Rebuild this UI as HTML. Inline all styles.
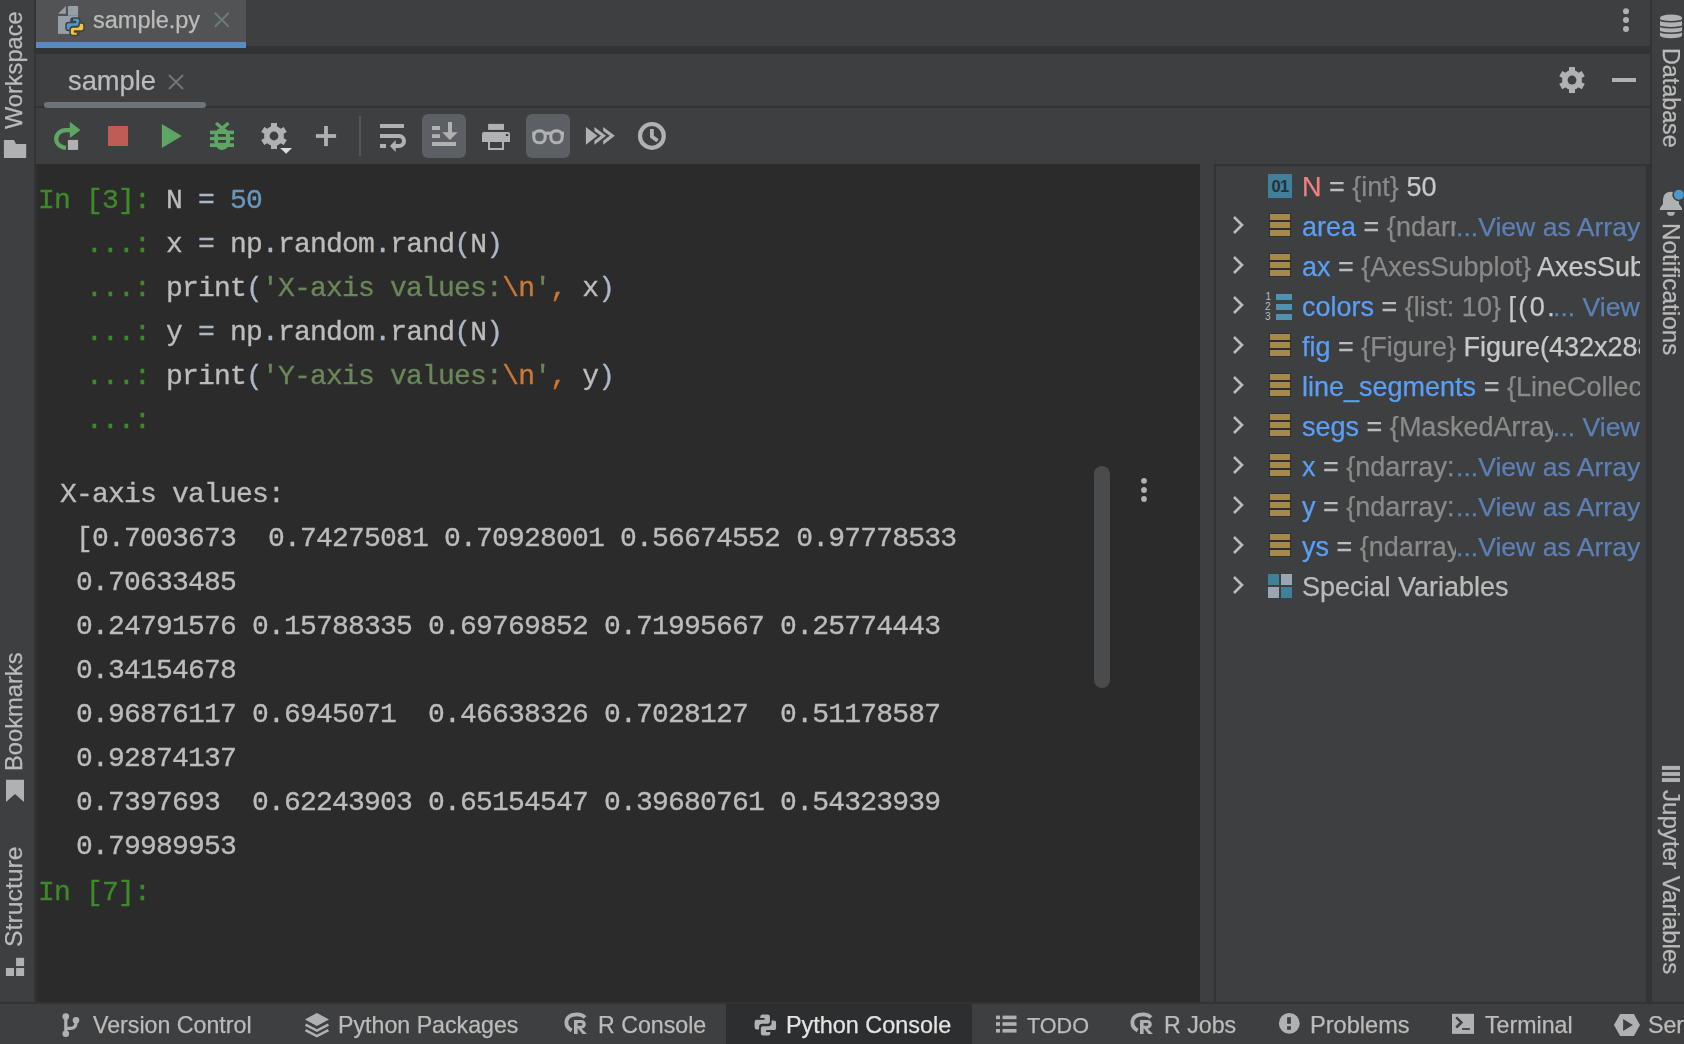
<!DOCTYPE html>
<html><head><meta charset="utf-8">
<style>
*{margin:0;padding:0;box-sizing:border-box}
html,body{width:1684px;height:1044px;overflow:hidden;background:#3e3f41;font-family:"Liberation Sans",sans-serif}
.ui,.ln,.vr,.vl{will-change:transform}
.ui,.vr,.vl{-webkit-text-stroke:0.25px currentColor}
.abs{position:absolute}
.ui{color:#bbbbbb;font-family:"Liberation Sans",sans-serif;white-space:nowrap}
#con{position:absolute;left:36px;top:164px;width:1164px;height:839px;background:#2b2b2b;overflow:hidden}
.ln{position:absolute;height:44px;line-height:44px;font-family:"Liberation Mono",monospace;font-size:28px;letter-spacing:-0.8px;white-space:pre;color:#bcbcbc;-webkit-text-stroke:0.35px currentColor}
.g{color:#3d8a28}.n{color:#6897bb}.s{color:#6a8759}.o{color:#cc7832}.p{color:#a9b7c6}
.vr{position:absolute;left:87px;height:40px;line-height:40px;font-size:27px;white-space:nowrap;color:#bbbbbb}
.vl{position:absolute;right:0;height:40px;line-height:40px;font-size:26.6px;white-space:nowrap;color:#5b80b6;background:#3e3f41}
.nr{color:#f08080}.nb{color:#5a9ff5}.eq{color:#bbbbbb}.ty{color:#8a8a8a}.wv{color:#c8c8c8}.sv{color:#bbbbbb}
</style></head><body>
<div class="abs" style="left:0px;top:0px;width:34px;height:1003px;background:#3e3f41;"></div>
<div class="abs" style="left:34px;top:0px;width:2px;height:1003px;background:#323335;"></div>
<div class="abs" style="left:1650px;top:0px;width:2px;height:1003px;background:#323335;"></div>
<div class="abs" style="left:1652px;top:0px;width:32px;height:1003px;background:#3e3f41;"></div>
<div class="abs" style="left:1648px;top:164px;width:2px;height:839px;background:#323335;"></div>
<div class="abs" style="left:36px;top:0px;width:1614px;height:46px;background:#3e3f41;"></div>
<div class="abs" style="left:36px;top:0px;width:210px;height:42px;background:#525355;"></div>
<div class="abs" style="left:36px;top:46px;width:1614px;height:8px;background:#323335;"></div>
<div class="abs" style="left:36px;top:42px;width:210px;height:6px;background:#5a89c4;"></div>
<div class="abs ui" style="left:92.5px;top:5px;font-size:23.5px;line-height:30px">sample.py</div>
<div class="abs" style="left:36px;top:54px;width:1614px;height:52px;background:#3e3f41;"></div>
<div class="abs" style="left:36px;top:106px;width:1614px;height:2px;background:#323335;"></div>
<div class="abs" style="left:44px;top:102px;width:162px;height:6px;background:#6e7377;border-radius:3px"></div>
<div class="abs ui" style="left:68px;top:64.5px;font-size:27.3px;line-height:32px">sample</div>
<div class="abs" style="left:36px;top:108px;width:1614px;height:56px;background:#3e3f41;"></div>
<div class="abs" style="left:36px;top:164px;width:1614px;height:2px;background:#323335;"></div>
<div class="abs" style="left:359px;top:116px;width:2px;height:40px;background:#545557;"></div>
<div class="abs" style="left:422px;top:114px;width:44px;height:44px;background:#5c6064;border-radius:6px"></div>
<div class="abs" style="left:526px;top:114px;width:44px;height:44px;background:#5c6064;border-radius:6px"></div>
<svg class="abs" style="left:50px;top:118px" width="36" height="36" viewBox="0 0 36 36"><path d="M16 29.75 A9.8 8.85 0 0 1 16 12.05 L20.5 12.05" stroke="#5fa664" stroke-width="4.2" fill="none"/><polygon points="19.8,3.8 30.5,11.9 19.8,20" fill="#5fa664"/><rect x="17.9" y="21.9" width="10.2" height="10" fill="#afb1b3"/></svg>
<div class="abs" style="left:108px;top:126px;width:20px;height:20px;background:#c05c56;"></div>
<svg class="abs" style="left:150px;top:118px" width="36" height="36" viewBox="0 0 36 36"><polygon points="11.9,6 31.8,18 11.9,30" fill="#5fa664"/></svg>
<svg class="abs" style="left:204px;top:118px" width="36" height="36" viewBox="0 0 36 36"><g fill="#5fa664"><ellipse cx="18.2" cy="20.8" rx="8.2" ry="11.1"/><rect x="6" y="12.6" width="24" height="3.6"/><rect x="6" y="19" width="24" height="3.2"/><rect x="6" y="25.3" width="24" height="3.7"/></g><g stroke="#5fa664" stroke-width="3.4"><line x1="12" y1="5" x2="18.5" y2="10.5"/><line x1="24.5" y1="5" x2="18" y2="10.5"/></g><g fill="#3e3f41"><rect x="14.1" y="16" width="7.8" height="2.8"/><rect x="14.1" y="22" width="7.8" height="2.8"/></g></svg>
<svg class="abs" style="left:256px;top:118px" width="40" height="40" viewBox="0 0 40 40"><g fill="#afb1b3" transform="translate(18 18)"><circle r="10"/><rect x="-3" y="-13" width="6" height="26"/><rect x="-3" y="-13" width="6" height="26" transform="rotate(60)"/><rect x="-3" y="-13" width="6" height="26" transform="rotate(120)"/></g><circle cx="18" cy="18" r="4.4" fill="#3e3f41"/><polygon points="24.1,30.1 36,30.1 30.1,35.8" fill="#dcdcdc"/></svg>
<svg class="abs" style="left:310px;top:120px" width="32" height="32" viewBox="0 0 32 32"><g fill="#afb1b3"><rect x="5.9" y="14.1" width="20.2" height="3.8"/><rect x="14.1" y="6" width="3.8" height="20.1"/></g></svg>
<svg class="abs" style="left:374px;top:118px" width="36" height="36" viewBox="0 0 36 36"><g fill="#afb1b3"><rect x="6" y="6" width="24" height="4"/><rect x="6" y="26" width="6" height="4"/><polygon points="16,28.1 21.7,22 21.7,34"/></g><path d="M6 18 L25 18 A5 5 0 0 1 25 28 L21 28" stroke="#afb1b3" stroke-width="4" fill="none"/></svg>
<svg class="abs" style="left:422px;top:114px" width="44" height="44" viewBox="0 0 44 44"><g fill="#afb1b3"><rect x="10" y="12" width="8" height="4"/><rect x="10" y="20.2" width="8" height="3.8"/><rect x="10" y="28" width="24" height="4"/><rect x="26" y="8" width="4" height="12"/><polygon points="20.2,18.3 35.6,18.3 27.9,26"/></g></svg>
<svg class="abs" style="left:476px;top:118px" width="40" height="40" viewBox="0 0 40 40"><g fill="#afb1b3"><rect x="12.1" y="5.9" width="15.9" height="6"/><path d="M8 14 H32 A2 2 0 0 1 34 16 V24 H6 V16 A2 2 0 0 1 8 14 Z"/></g><rect x="29.9" y="16.1" width="2.3" height="1.9" fill="#323335"/><rect x="13" y="23" width="14" height="8" fill="none" stroke="#afb1b3" stroke-width="2"/></svg>
<svg class="abs" style="left:528px;top:118px" width="40" height="40" viewBox="0 0 40 40"><g fill="none" stroke="#afb1b3" stroke-width="3.1"><rect x="5.8" y="12.9" width="11.4" height="11.9" rx="5" ry="5.2"/><rect x="22.8" y="12.9" width="11.4" height="11.9" rx="5" ry="5.2"/></g><g fill="#afb1b3"><rect x="16" y="13.6" width="8" height="3.3"/><rect x="4.2" y="13.6" width="3" height="4"/><rect x="33" y="13.6" width="3" height="4"/></g></svg>
<svg class="abs" style="left:580px;top:118px" width="40" height="40" viewBox="0 0 40 40"><g fill="#afb1b3"><polygon points="5.9,9 17.4,17.8 5.9,26.8"/><polygon points="14.4,9 26,17.8 14.4,26.8 14.4,22.7 20.9,17.8 14.4,12.9"/><polygon points="23.2,9 34.8,17.8 23.2,26.8 23.2,22.7 29.7,17.8 23.2,12.9"/></g></svg>
<svg class="abs" style="left:632px;top:116px" width="40" height="40" viewBox="0 0 40 40"><circle cx="19.9" cy="19.9" r="11.9" fill="none" stroke="#afb1b3" stroke-width="4.2"/><polyline points="19.9,13 19.9,20.6 25.6,24.8" fill="none" stroke="#afb1b3" stroke-width="3.8"/></svg>
<svg class="abs" style="left:1616px;top:4px" width="20" height="32" viewBox="0 0 20 32"><g fill="#afb1b3"><circle cx="10" cy="7.2" r="3"/><circle cx="10" cy="16" r="3"/><circle cx="10" cy="24.9" r="3"/></g></svg>
<svg class="abs" style="left:1550px;top:56px" width="44" height="48" viewBox="0 0 44 48"><g fill="#afb1b3" transform="translate(22 24.05)"><circle r="10"/><rect x="-3" y="-13" width="6" height="26"/><rect x="-3" y="-13" width="6" height="26" transform="rotate(60)"/><rect x="-3" y="-13" width="6" height="26" transform="rotate(120)"/></g><circle cx="22" cy="24.05" r="4.45" fill="#3e3f41"/></svg>
<div class="abs" style="left:1612px;top:78px;width:24px;height:4px;background:#afb1b3;"></div>
<svg class="abs" style="left:54px;top:2px" width="36" height="36" viewBox="0 0 36 36"><g fill="#969ea6"><polygon points="4,11.7 11.9,4 11.9,11.7"/><rect x="14" y="4" width="10.1" height="9.8"/><rect x="4" y="14" width="20" height="17.9"/></g><g stroke="#3f4143" stroke-width="1.5" stroke-linejoin="round"><path d="M16.9 18.4 Q16.9 15.9 19.4 15.9 H23.4 Q25.9 15.9 25.9 18.4 V22 Q25.9 24.5 23.4 24.5 H19.4 Q16.9 24.5 16.9 27 V28.6 H14.5 Q12 28.6 12 26.1 V23 Q12 20.5 14.5 20.5 H21.5 V19.6 H16.9 Z" fill="#4d98ce"/><path d="M25.1 31.1 Q25.1 33.6 22.6 33.6 H18.6 Q16.1 33.6 16.1 31.1 V27.5 Q16.1 25 18.6 25 H22.6 Q25.1 25 25.1 22.5 V20.9 H27.5 Q30 20.9 30 23.4 V26.5 Q30 29 27.5 29 H20.5 V29.9 H25.1 Z" fill="#f2c53d"/></g><circle cx="18.5" cy="17.8" r="0.9" fill="#323335"/><circle cx="23.5" cy="31.7" r="0.9" fill="#323335"/></svg>
<svg class="abs" style="left:212px;top:10px" width="20" height="20" viewBox="0 0 20 20"><path d="M2.8 2.8 L16.8 16.8 M16.8 2.8 L2.8 16.8" stroke="#6f7878" stroke-width="2"/></svg>
<svg class="abs" style="left:166px;top:72px" width="20" height="20" viewBox="0 0 20 20"><path d="M3 3 L17 17 M17 3 L3 17" stroke="#6f7878" stroke-width="2"/></svg>
<div id="con">
<div class="ln" style="top:15px;left:2px"><span class="g">In [3]:</span> N <span class="p">=</span> <span class="n">50</span></div>
<div class="ln" style="top:59px;left:2px"><span class="g">   ...:</span> x <span class="p">=</span> np<span class="p">.</span>random<span class="p">.</span>rand<span class="p">(</span>N<span class="p">)</span></div>
<div class="ln" style="top:103px;left:2px"><span class="g">   ...:</span> print<span class="p">(</span><span class="s">'X-axis values:</span><span class="o">\n</span><span class="s">'</span><span class="o">,</span> x<span class="p">)</span></div>
<div class="ln" style="top:147px;left:2px"><span class="g">   ...:</span> y <span class="p">=</span> np<span class="p">.</span>random<span class="p">.</span>rand<span class="p">(</span>N<span class="p">)</span></div>
<div class="ln" style="top:191px;left:2px"><span class="g">   ...:</span> print<span class="p">(</span><span class="s">'Y-axis values:</span><span class="o">\n</span><span class="s">'</span><span class="o">,</span> y<span class="p">)</span></div>
<div class="ln" style="top:235px;left:2px"><span class="g">   ...:</span></div>
<div class="ln" style="top:309px;left:24px">X-axis values:</div>
<div class="ln" style="top:353px;left:24px"> [0.7003673  0.74275081 0.70928001 0.56674552 0.97778533</div>
<div class="ln" style="top:397px;left:24px"> 0.70633485</div>
<div class="ln" style="top:441px;left:24px"> 0.24791576 0.15788335 0.69769852 0.71995667 0.25774443</div>
<div class="ln" style="top:485px;left:24px"> 0.34154678</div>
<div class="ln" style="top:529px;left:24px"> 0.96876117 0.6945071  0.46638326 0.7028127  0.51178587</div>
<div class="ln" style="top:573px;left:24px"> 0.92874137</div>
<div class="ln" style="top:617px;left:24px"> 0.7397693  0.62243903 0.65154547 0.39680761 0.54323939</div>
<div class="ln" style="top:661px;left:24px"> 0.79989953</div>
<div class="ln" style="top:707px;left:2px"><span class="g">In [7]:</span></div>
</div>
<div class="abs" style="left:36px;top:166px;width:2px;height:836px;background:#2f2f31;"></div>
<div class="abs" style="left:1094px;top:466px;width:16px;height:222px;background:#4a4b4c;border-radius:8px"></div>
<svg class="abs" style="left:1134px;top:472px" width="20" height="36" viewBox="0 0 20 36"><g fill="#afb1b3"><circle cx="10" cy="8.8" r="2.9"/><circle cx="10" cy="18" r="2.9"/><circle cx="10" cy="27" r="2.9"/></g></svg>
<div class="abs" style="left:1200px;top:164px;width:14px;height:839px;background:#3e3f41;"></div>
<div class="abs" style="left:1214px;top:164px;width:434px;height:839px;background:#3e3f41;border-left:2px solid #323335;border-top:2px solid #323335;border-right:2px solid #323335"></div>
<div class="abs" style="left:1216px;top:166px;width:424px;height:837px;overflow:hidden">
<div class="abs" style="left:52px;top:8px;width:24px;height:24px;background:#40809a;color:#24323a;font:bold 16.5px/25px 'Liberation Sans';text-align:center;letter-spacing:-0.6px">01</div>
<div class="vr" style="top:1px;left:86px"><span class="nr">N</span> <span class="eq">=</span> <span class="ty">{int}</span> <span class="wv">50</span></div>
<svg class="abs" style="left:16px;top:49px" width="12" height="20" viewBox="0 0 12 20"><path d="M2 2 L10 10 L2 18" fill="none" stroke="#bbbbbb" stroke-width="2.6"/></svg>
<svg class="abs" style="left:52px;top:47px" width="24" height="24" viewBox="0 0 24 24"><g fill="#2e3236"><rect x="1" y="0" width="22" height="8"/><rect x="1" y="8" width="22" height="8"/><rect x="1" y="16" width="22" height="8"/></g><g fill="#a8874b"><rect x="2" y="1" width="20" height="6"/><rect x="2" y="9" width="20" height="6"/><rect x="2" y="17" width="20" height="6"/></g></svg>
<div class="vr" style="top:41px;left:86px"><span class="nb">area</span> <span class="eq">=</span> <span class="ty">{ndarray: (50,)} [0.3, 0.2]</span></div>
<div class="vl" style="top:41px">...View as Array</div>
<svg class="abs" style="left:16px;top:89px" width="12" height="20" viewBox="0 0 12 20"><path d="M2 2 L10 10 L2 18" fill="none" stroke="#bbbbbb" stroke-width="2.6"/></svg>
<svg class="abs" style="left:52px;top:87px" width="24" height="24" viewBox="0 0 24 24"><g fill="#2e3236"><rect x="1" y="0" width="22" height="8"/><rect x="1" y="8" width="22" height="8"/><rect x="1" y="16" width="22" height="8"/></g><g fill="#a8874b"><rect x="2" y="1" width="20" height="6"/><rect x="2" y="9" width="20" height="6"/><rect x="2" y="17" width="20" height="6"/></g></svg>
<div class="vr" style="top:81px;left:86px"><span class="nb">ax</span> <span class="eq">=</span> <span class="ty">{AxesSubplot}</span> <span class="wv">AxesSubplot(0.125,0.11;0.775x0.77)</span></div>
<svg class="abs" style="left:16px;top:129px" width="12" height="20" viewBox="0 0 12 20"><path d="M2 2 L10 10 L2 18" fill="none" stroke="#bbbbbb" stroke-width="2.6"/></svg>
<svg class="abs" style="left:48px;top:124px" width="30" height="30" viewBox="0 0 30 30"><g fill="#4f93b0"><rect x="12" y="4" width="16" height="6"/><rect x="12" y="14" width="16" height="6"/><rect x="12" y="24" width="16" height="6"/></g><g fill="#bbbbbb" font-family="Liberation Sans" font-size="10"><text x="1.5" y="10">1</text><text x="1" y="20">2</text><text x="1" y="30">3</text></g></svg>
<div class="vr" style="top:121px;left:86px"><span class="nb">colors</span> <span class="eq">=</span> <span class="ty">{list: 10}</span> <span class="wv" style="letter-spacing:2.4px">[(0.</span></div>
<div class="vl" style="top:121px">... View</div>
<svg class="abs" style="left:16px;top:169px" width="12" height="20" viewBox="0 0 12 20"><path d="M2 2 L10 10 L2 18" fill="none" stroke="#bbbbbb" stroke-width="2.6"/></svg>
<svg class="abs" style="left:52px;top:167px" width="24" height="24" viewBox="0 0 24 24"><g fill="#2e3236"><rect x="1" y="0" width="22" height="8"/><rect x="1" y="8" width="22" height="8"/><rect x="1" y="16" width="22" height="8"/></g><g fill="#a8874b"><rect x="2" y="1" width="20" height="6"/><rect x="2" y="9" width="20" height="6"/><rect x="2" y="17" width="20" height="6"/></g></svg>
<div class="vr" style="top:161px;left:86px"><span class="nb">fig</span> <span class="eq">=</span> <span class="ty">{Figure}</span> <span class="wv">Figure(432x288)</span></div>
<svg class="abs" style="left:16px;top:209px" width="12" height="20" viewBox="0 0 12 20"><path d="M2 2 L10 10 L2 18" fill="none" stroke="#bbbbbb" stroke-width="2.6"/></svg>
<svg class="abs" style="left:52px;top:207px" width="24" height="24" viewBox="0 0 24 24"><g fill="#2e3236"><rect x="1" y="0" width="22" height="8"/><rect x="1" y="8" width="22" height="8"/><rect x="1" y="16" width="22" height="8"/></g><g fill="#a8874b"><rect x="2" y="1" width="20" height="6"/><rect x="2" y="9" width="20" height="6"/><rect x="2" y="17" width="20" height="6"/></g></svg>
<div class="vr" style="top:201px;left:86px"><span class="nb">line_segments</span> <span class="eq">=</span> <span class="ty">{LineCollection} &lt;matplotlib&gt;</span></div>
<svg class="abs" style="left:16px;top:249px" width="12" height="20" viewBox="0 0 12 20"><path d="M2 2 L10 10 L2 18" fill="none" stroke="#bbbbbb" stroke-width="2.6"/></svg>
<svg class="abs" style="left:52px;top:247px" width="24" height="24" viewBox="0 0 24 24"><g fill="#2e3236"><rect x="1" y="0" width="22" height="8"/><rect x="1" y="8" width="22" height="8"/><rect x="1" y="16" width="22" height="8"/></g><g fill="#a8874b"><rect x="2" y="1" width="20" height="6"/><rect x="2" y="9" width="20" height="6"/><rect x="2" y="17" width="20" height="6"/></g></svg>
<div class="vr" style="top:241px;left:86px"><span class="nb">segs</span> <span class="eq">=</span> <span class="ty">{MaskedArray: (50, 2, 2)}</span></div>
<div class="vl" style="top:241px">... View</div>
<svg class="abs" style="left:16px;top:289px" width="12" height="20" viewBox="0 0 12 20"><path d="M2 2 L10 10 L2 18" fill="none" stroke="#bbbbbb" stroke-width="2.6"/></svg>
<svg class="abs" style="left:52px;top:287px" width="24" height="24" viewBox="0 0 24 24"><g fill="#2e3236"><rect x="1" y="0" width="22" height="8"/><rect x="1" y="8" width="22" height="8"/><rect x="1" y="16" width="22" height="8"/></g><g fill="#a8874b"><rect x="2" y="1" width="20" height="6"/><rect x="2" y="9" width="20" height="6"/><rect x="2" y="17" width="20" height="6"/></g></svg>
<div class="vr" style="top:281px;left:86px"><span class="nb">x</span> <span class="eq">=</span> <span class="ty">{ndarray:</span></div>
<div class="vl" style="top:281px">...View as Array</div>
<svg class="abs" style="left:16px;top:329px" width="12" height="20" viewBox="0 0 12 20"><path d="M2 2 L10 10 L2 18" fill="none" stroke="#bbbbbb" stroke-width="2.6"/></svg>
<svg class="abs" style="left:52px;top:327px" width="24" height="24" viewBox="0 0 24 24"><g fill="#2e3236"><rect x="1" y="0" width="22" height="8"/><rect x="1" y="8" width="22" height="8"/><rect x="1" y="16" width="22" height="8"/></g><g fill="#a8874b"><rect x="2" y="1" width="20" height="6"/><rect x="2" y="9" width="20" height="6"/><rect x="2" y="17" width="20" height="6"/></g></svg>
<div class="vr" style="top:321px;left:86px"><span class="nb">y</span> <span class="eq">=</span> <span class="ty">{ndarray:</span></div>
<div class="vl" style="top:321px">...View as Array</div>
<svg class="abs" style="left:16px;top:369px" width="12" height="20" viewBox="0 0 12 20"><path d="M2 2 L10 10 L2 18" fill="none" stroke="#bbbbbb" stroke-width="2.6"/></svg>
<svg class="abs" style="left:52px;top:367px" width="24" height="24" viewBox="0 0 24 24"><g fill="#2e3236"><rect x="1" y="0" width="22" height="8"/><rect x="1" y="8" width="22" height="8"/><rect x="1" y="16" width="22" height="8"/></g><g fill="#a8874b"><rect x="2" y="1" width="20" height="6"/><rect x="2" y="9" width="20" height="6"/><rect x="2" y="17" width="20" height="6"/></g></svg>
<div class="vr" style="top:361px;left:86px"><span class="nb">ys</span> <span class="eq">=</span> <span class="ty">{ndarray: (50,)} [0.2]</span></div>
<div class="vl" style="top:361px">...View as Array</div>
<svg class="abs" style="left:16px;top:409px" width="12" height="20" viewBox="0 0 12 20"><path d="M2 2 L10 10 L2 18" fill="none" stroke="#bbbbbb" stroke-width="2.6"/></svg>
<svg class="abs" style="left:52px;top:408px" width="24" height="24" viewBox="0 0 24 24"><rect x="0" y="0" width="11" height="11" fill="#40809a"/><rect x="13" y="0" width="11" height="11" fill="#9aa7b0"/><rect x="0" y="13" width="11" height="11" fill="#9aa7b0"/><rect x="13" y="13" width="11" height="11" fill="#40809a"/></svg>
<div class="vr" style="top:401px;left:86px"><span class="sv">Special Variables</span> </div>
</div>
<div class="abs ui" style="left:-1.1px;top:128.5px;font-size:23.6px;line-height:30px;transform-origin:0 0;transform:rotate(-90deg)">Workspace</div>
<div class="abs ui" style="left:-1.1px;top:770.5px;font-size:23.7px;line-height:30px;transform-origin:0 0;transform:rotate(-90deg)">Bookmarks</div>
<div class="abs ui" style="left:-1.5px;top:946.5px;font-size:24.8px;line-height:30px;transform-origin:0 0;transform:rotate(-90deg)">Structure</div>
<div class="abs ui" style="left:1686.1px;top:48.0px;font-size:23.3px;line-height:30px;transform-origin:0 0;transform:rotate(90deg)">Database</div>
<div class="abs ui" style="left:1686.4px;top:223.0px;font-size:24.3px;line-height:30px;transform-origin:0 0;transform:rotate(90deg)">Notifications</div>
<div class="abs ui" style="left:1686.4px;top:790.0px;font-size:24.1px;line-height:30px;transform-origin:0 0;transform:rotate(90deg)">Jupyter Variables</div>
<svg class="abs" style="left:0;top:136px" width="34" height="26" viewBox="0 0 34 26"><path d="M3.9 4 H14 L16 8 H26.2 V22.1 H3.9 Z" fill="#afb1b3"/></svg>
<svg class="abs" style="left:0;top:776px" width="34" height="30" viewBox="0 0 34 30"><polygon points="6,3.8 24,3.8 24,26 15,18 6,26" fill="#afb1b3"/></svg>
<svg class="abs" style="left:0;top:954px" width="34" height="26" viewBox="0 0 34 26"><g fill="#afb1b3"><rect x="16.1" y="3.8" width="8" height="8.3"/><rect x="5.9" y="14" width="8.1" height="8"/><rect x="16.1" y="14" width="8" height="8"/></g></svg>
<svg class="abs" style="left:1652px;top:8px" width="32" height="36" viewBox="0 0 32 36"><path d="M8 9.8 A11 3.4 0 0 1 30 9.8 V27.6 A11 2.7 0 0 1 8 27.6 Z" fill="#afb1b3"/><g fill="none" stroke="#3e3f41" stroke-width="1.5"><path d="M7.5 11.3 A11.5 2.5 0 0 0 30.5 11.3"/><path d="M7.5 17.4 A11.5 2.3 0 0 0 30.5 17.4"/><path d="M7.5 23 A11.5 2.2 0 0 0 30.5 23"/></g></svg>
<svg class="abs" style="left:1652px;top:184px" width="32" height="36" viewBox="0 0 32 36"><path d="M19 7.8 C13 7.8 11 12 11 17 V20 L7.9 24.2 V25.9 H30 V24.2 L27 20 V17 C27 12 25 7.8 19 7.8 Z" fill="#afb1b3"/><path d="M15 27.9 H22.8 A3.9 3.9 0 0 1 15 27.9 Z" fill="#afb1b3"/><circle cx="26.9" cy="10.7" r="6.6" fill="#3e3f41"/><circle cx="26.9" cy="10.7" r="5" fill="#4a98d0"/></svg>
<svg class="abs" style="left:1652px;top:760px" width="32" height="30" viewBox="0 0 32 30"><g fill="#afb1b3"><rect x="9.9" y="5.9" width="18.1" height="4"/><rect x="9.9" y="12.1" width="18.1" height="3.8"/><rect x="9.9" y="18.1" width="18.1" height="3.9"/></g></svg>
<div class="abs" style="left:0px;top:1002px;width:1684px;height:2px;background:#323335;"></div>
<div class="abs" style="left:0px;top:1004px;width:1684px;height:40px;background:#3e3f41;"></div>
<div class="abs" style="left:726px;top:1004px;width:246px;height:40px;background:#2d2e30;"></div>
<div class="abs ui" style="left:93px;top:1010.4px;font-size:23.2px;line-height:30px;color:#bbbbbb">Version Control</div>
<div class="abs ui" style="left:338px;top:1010.4px;font-size:23.2px;line-height:30px;color:#bbbbbb">Python Packages</div>
<div class="abs ui" style="left:597.5px;top:1010.4px;font-size:23.2px;line-height:30px;color:#bbbbbb">R Console</div>
<div class="abs ui" style="left:785.5px;top:1010.3px;font-size:23.4px;line-height:30px;color:#e4e4e4">Python Console</div>
<div class="abs ui" style="left:1027px;top:1010.9px;font-size:21.6px;line-height:30px;color:#bbbbbb">TODO</div>
<div class="abs ui" style="left:1164px;top:1010.4px;font-size:23.2px;line-height:30px;color:#bbbbbb">R Jobs</div>
<div class="abs ui" style="left:1309.5px;top:1010.2px;font-size:23.6px;line-height:30px;color:#bbbbbb">Problems</div>
<div class="abs ui" style="left:1484.5px;top:1010.4px;font-size:23.2px;line-height:30px;color:#bbbbbb">Terminal</div>
<div class="abs ui" style="left:1647.5px;top:1010.4px;font-size:23.2px;line-height:30px;color:#bbbbbb">Services</div>
<svg class="abs" style="left:56px;top:1008px" width="30" height="34" viewBox="0 0 30 34"><g fill="#afb1b3"><circle cx="9.8" cy="8.6" r="3.3"/><circle cx="20" cy="12.2" r="3.3"/><circle cx="9.8" cy="25.7" r="3.3"/></g><g fill="none" stroke="#afb1b3" stroke-width="3.2"><path d="M9.8 8.6 V25.7"/><path d="M20 12.2 V14.5 Q20 20.3 14.5 20.3 H9.8"/></g></svg>
<svg class="abs" style="left:300px;top:1008px" width="34" height="34" viewBox="0 0 34 34"><g fill="#afb1b3"><polygon points="4.9,11.4 16.9,4.9 29,11.4 16.9,17.9"/></g><g fill="none" stroke="#afb1b3" stroke-width="2.7"><polyline points="5.5,16.6 16.9,22.6 28.4,16.6"/><polyline points="5.5,22.1 16.9,28.1 28.4,22.1"/></g></svg>
<svg class="abs" style="left:560px;top:1008px" width="34" height="34" viewBox="0 0 34 34"><path d="M25 9.6 C21 5 8 5 6.5 13 C5.8 17.5 8.5 20.8 11.7 22.5" fill="none" stroke="#afb1b3" stroke-width="3.8"/><path d="M14 12 H21.5 A4.3 4.3 0 0 1 21.5 20.6 L27 26 H22.5 L18 20.6 H17.6 V26 H14 Z M17.6 15 V17.8 H21 A1.4 1.4 0 0 0 21 15 Z" fill="#afb1b3" fill-rule="evenodd"/></svg>
<svg class="abs" style="left:1126px;top:1008px" width="34" height="34" viewBox="0 0 34 34"><path d="M25 9.6 C21 5 8 5 6.5 13 C5.8 17.5 8.5 20.8 11.7 22.5" fill="none" stroke="#afb1b3" stroke-width="3.8"/><path d="M14 12 H21.5 A4.3 4.3 0 0 1 21.5 20.6 L27 26 H22.5 L18 20.6 H17.6 V26 H14 Z M17.6 15 V17.8 H21 A1.4 1.4 0 0 0 21 15 Z" fill="#afb1b3" fill-rule="evenodd"/></svg>
<svg class="abs" style="left:748px;top:1008px" width="34" height="34" viewBox="0 0 34 34"><g fill="#afb1b3" stroke="#2d2e30" stroke-width="1.2"><path d="M14.5 5.9 h5.2 a2.8 2.8 0 0 1 2.8 2.8 v4.8 a2.8 2.8 0 0 1 -2.8 2.8 h-5.4 a2.6 2.6 0 0 0 -2.6 2.6 v3.2 h-2.9 a2.8 2.8 0 0 1 -2.8 -2.8 v-5.3 a2.8 2.8 0 0 1 2.8 -2.8 h7.2 v-0.6 h-4.3 v-1.9 a2.8 2.8 0 0 1 2.8 -2.8 z"/><path d="M20.2 28 h-5.2 a2.8 2.8 0 0 1 -2.8 -2.8 v-4.8 a2.8 2.8 0 0 1 2.8 -2.8 h5.4 a2.6 2.6 0 0 0 2.6 -2.6 v-3.2 h2.9 a2.8 2.8 0 0 1 2.8 2.8 v5.3 a2.8 2.8 0 0 1 -2.8 2.8 h-7.2 v0.6 h4.3 v1.9 a2.8 2.8 0 0 1 -2.8 2.8 z"/></g></svg>
<svg class="abs" style="left:990px;top:1008px" width="30" height="30" viewBox="0 0 30 30"><g fill="#afb1b3"><rect x="6" y="7.6" width="4" height="3.6"/><rect x="12.5" y="7.6" width="14" height="3.6"/><rect x="6" y="14.2" width="4" height="3.6"/><rect x="12.5" y="14.2" width="14" height="3.6"/><rect x="6" y="21" width="4" height="3.6"/><rect x="12.5" y="21" width="14" height="3.6"/></g></svg>
<svg class="abs" style="left:1272px;top:1006px" width="34" height="34" viewBox="0 0 34 34"><circle cx="17.3" cy="17.4" r="10.4" fill="#afb1b3"/><g fill="#3e3f41"><rect x="15.1" y="11.2" width="3.8" height="6.6"/><rect x="15.1" y="20.2" width="3.8" height="3.6"/></g></svg>
<svg class="abs" style="left:1444px;top:1006px" width="36" height="34" viewBox="0 0 36 34"><rect x="8" y="7.8" width="22" height="20.1" fill="#afb1b3"/><polyline points="12.2,11.3 17.4,16.4 12.2,21.5" fill="none" stroke="#3e3f41" stroke-width="2.5"/><rect x="18.1" y="22.1" width="7.8" height="1.8" fill="#3e3f41"/></svg>
<svg class="abs" style="left:1608px;top:1006px" width="36" height="38" viewBox="0 0 36 38"><polygon points="5.9,19 12.2,8.1 25.9,8.1 32,19 25.9,30 12.2,30" fill="#afb1b3"/><polygon points="15.1,12.9 24.8,19 15.1,25" fill="#3e3f41"/></svg>
</body></html>
